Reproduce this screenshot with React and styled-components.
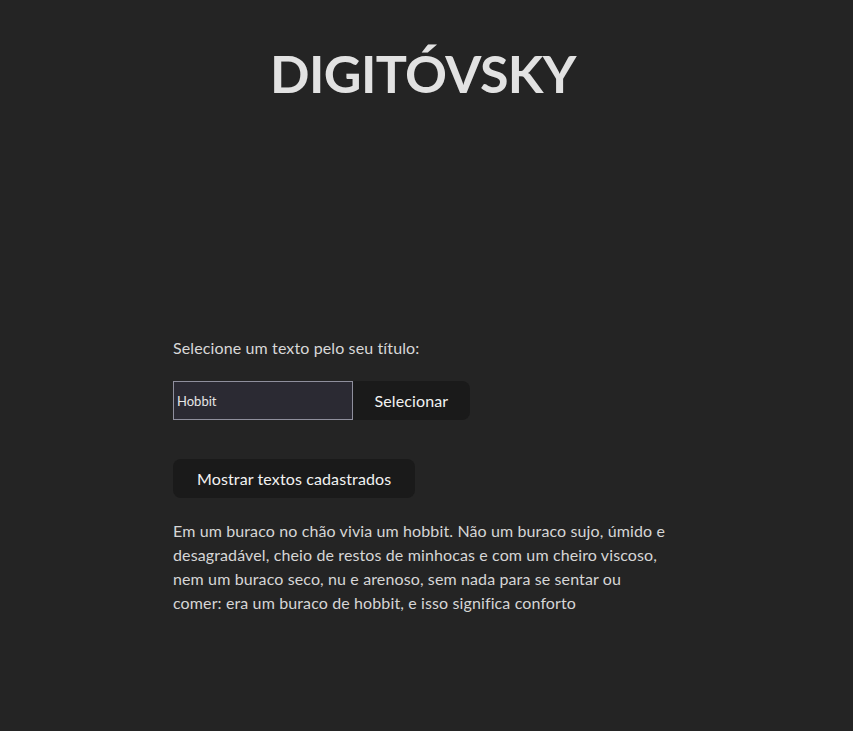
import styled, { createGlobalStyle } from "styled-components";

const GlobalStyle = createGlobalStyle`
  * {
    box-sizing: border-box;
  }
  body {
    margin: 0;
    background: #242424;
    color: rgba(255, 255, 255, 0.87);
    font-family: Lato, "Noto Sans", sans-serif;
    font-size: 16px;
    line-height: 1.5;
    letter-spacing: 0.12px;
  }
`;

const texto =
  "Em um buraco no chão vivia um hobbit. Não um buraco sujo, úmido e desagradável, cheio de restos de minhocas e com um cheiro viscoso, nem um buraco seco, nu e arenoso, sem nada para se sentar ou comer: era um buraco de hobbit, e isso significa conforto";

export default function App() {
  return (
    <>
      <GlobalStyle />
      <Page>
        <Title>DIGITÓVSKY</Title>
        <Main>
          <Label htmlFor="titulo">Selecione um texto pelo seu título:</Label>
          <SearchRow>
            <Input id="titulo" defaultValue="Hobbit" />
            <Button $joined>Selecionar</Button>
          </SearchRow>
          <Button>Mostrar textos cadastrados</Button>
          <Text>{texto}</Text>
        </Main>
      </Page>
    </>
  );
}

const Page = styled.div`
  display: flex;
  flex-direction: column;
  align-items: center;
  min-height: 731px;
  padding: 45px 7px 0 0;
`;

const Title = styled.h1`
  margin: 0;
  font-size: 52px;
  font-weight: 700;
  line-height: 1.1;
  letter-spacing: -0.6px;
  color: #e2e2e2;
`;

const Main = styled.main`
  width: 500px;
  margin-top: 234px;
  display: flex;
  flex-direction: column;
  align-items: flex-start;
`;

const Label = styled.label`
  display: block;
  color: #d8d8d8;
`;

const SearchRow = styled.div`
  display: flex;
  margin: 21px 0 39px;
`;

const Input = styled.input`
  width: 180px;
  height: 39px;
  padding: 0 3px;
  border: 1px solid #8f8f9d;
  background: #2b2a33;
  color: #e6e6e6;
  font-family: inherit;
  font-size: 13px;
  outline: none;
`;

const Button = styled.button`
  height: 39px;
  padding: 0 ${(p) => (p.$joined ? "20.5px" : "23px")};
  border: 1px solid transparent;
  border-radius: ${(p) => (p.$joined ? "0 8px 8px 0" : "8px")};
  background: #1a1a1a;
  color: #f2f2f2;
  font-family: inherit;
  font-size: 16px;
  font-weight: 400;
  letter-spacing: 0.12px;
  cursor: pointer;
`;

const Text = styled.p`
  margin: 21px 0 0;
  color: #d6d6d6;
`;
